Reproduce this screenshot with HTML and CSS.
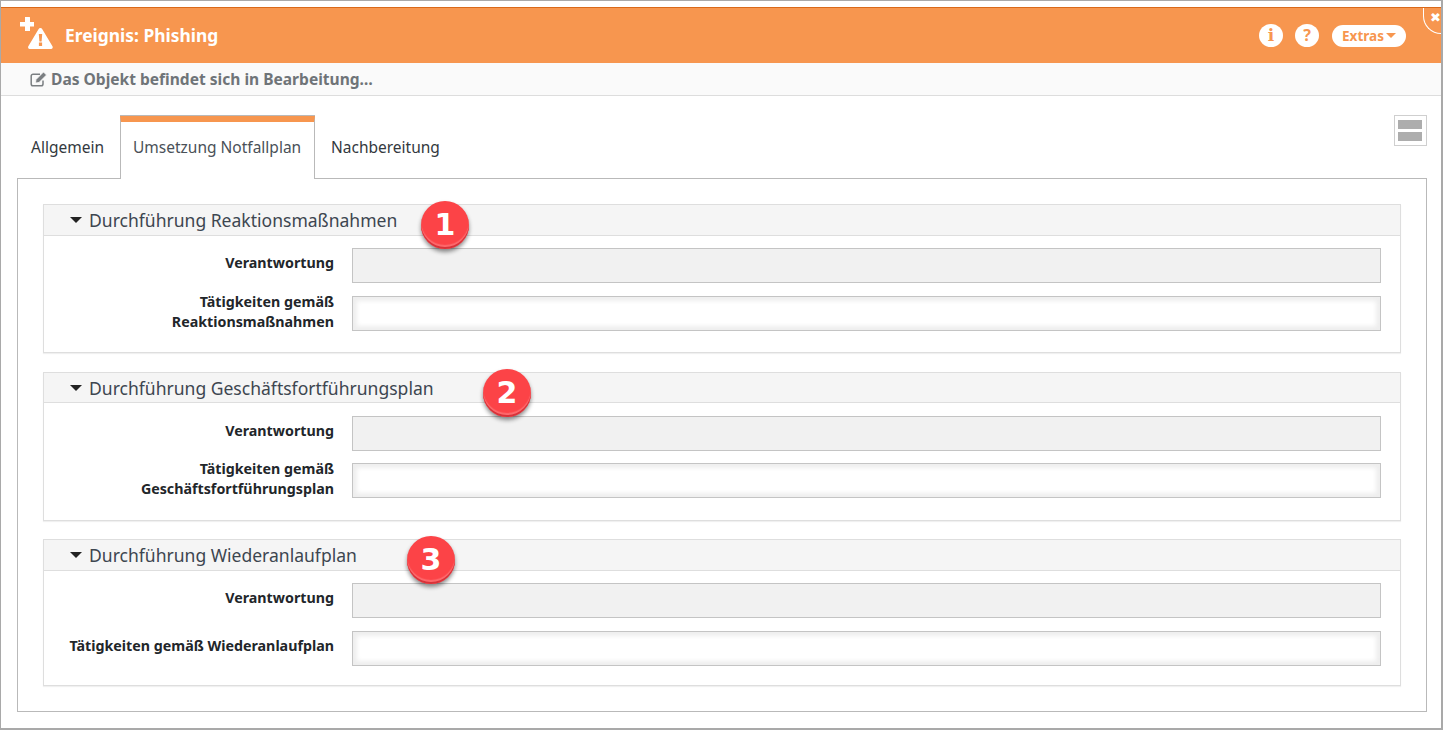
FILE: index.html
```html
<!DOCTYPE html>
<html lang="de">
<head>
<meta charset="utf-8">
<title>Ereignis: Phishing</title>
<link rel="stylesheet" href="styles.css">
</head>
<body>
<div class="window">
  <header class="titlebar">
    <svg class="title-icon" width="36" height="34" viewBox="0 0 36 34">
      <path class="w" d="M6 1h4.500a.5.5 0 0 1 .5.5V6h4v4.500h-4V15H6v-4.500H1V6h5z"/>
      <path class="w" d="M19.500 13.200a2.200 2.200 0 0 1 3.800 0l10.300 17.300a1.800 1.800 0 0 1-1.500 2.500H10.700a1.800 1.800 0 0 1-1.500-2.500z"/>
      <path class="o" d="M19.800 18h3.400l-.6 7.500h-2.200zM19.900 26.500h3.200V30h-3.200z"/>
    </svg>
    <h1 class="title">Ereignis: Phishing</h1>
    <div class="title-actions">
      <span class="round info">i</span>
      <span class="round">?</span>
      <span class="extras">Extras<i class="caret-o"></i></span>
    </div>
    <span class="close">✖</span>
  </header>
  <div class="statusbar">
    <svg class="edit-icon" width="18" height="16" viewBox="0 0 18 16">
      <path class="e1" d="M13 9.500V13a1.800 1.800 0 0 1-1.800 1.800H3A1.800 1.800 0 0 1 1.200 13V5A1.800 1.800 0 0 1 3 3.200h7"/>
      <path class="e2" d="M6 8.500 13.500 1l3 3L9 11.500l-3.500.5z"/>
    </svg>
    <span>Das Objekt befindet sich in Bearbeitung…</span>
  </div>
  <main class="content">
    <nav class="tabs">
      <a class="tab">Allgemein</a>
      <a class="tab active">Umsetzung Notfallplan</a>
      <a class="tab">Nachbereitung</a>
      <span class="layout-toggle"><i></i><i></i></span>
    </nav>
    <div class="panel">
      <section class="group">
        <h2 class="group-head"><i class="caret"></i>Durchführung Reaktionsmaßnahmen</h2>
        <span class="badge b1">1</span>
        <div class="row"><label class="single">Verantwortung</label><div class="field readonly"></div></div>
        <div class="row"><label>Tätigkeiten gemäß<br>Reaktionsmaßnahmen</label><div class="field"></div></div>
      </section>
      <section class="group second">
        <h2 class="group-head"><i class="caret"></i>Durchführung Geschäftsfortführungsplan</h2>
        <span class="badge b2">2</span>
        <div class="row"><label class="single">Verantwortung</label><div class="field readonly"></div></div>
        <div class="row"><label>Tätigkeiten gemäß<br>Geschäftsfortführungsplan</label><div class="field"></div></div>
      </section>
      <section class="group last">
        <h2 class="group-head"><i class="caret"></i>Durchführung Wiederanlaufplan</h2>
        <span class="badge b3">3</span>
        <div class="row"><label class="single">Verantwortung</label><div class="field readonly"></div></div>
        <div class="row"><label class="single">Tätigkeiten gemäß Wiederanlaufplan</label><div class="field"></div></div>
      </section>
    </div>
  </main>
</div>
</body>
</html>
```
FILE: styles.css
```css
* { box-sizing: border-box; }
html, body { margin: 0; padding: 0; background: #fff; overflow: hidden; }
body { font-family: "Noto Sans", "Open Sans", sans-serif; color: #2b2b2b; }
.window {
  position: relative;
  width: 1443px;
  height: 730px;
  border: 1px solid #a9a9a9;
  border-width: 1px 2px 2px 1px;
  padding-top: 6px;
  overflow: hidden;
}
.titlebar {
  position: relative;
  height: 56px;
  background: #f7964f;
  border-top: 1px solid #d9691a;
  display: flex;
  align-items: center;
  padding-left: 64px;
  color: #fff;
}
.title-icon { position: absolute; left: 18px; top: 8px; }
.w { fill: #fff; }
.o { fill: #f7964f; }
.title { margin: 0 0 2px; font-size: 17.400px; font-weight: 700; }
.title-actions { margin-left: auto; margin-right: 35px; display: flex; align-items: center; gap: 12px; }
.round {
  width: 24px; height: 23px; border-radius: 50%; background: #fff; color: #f7964f;
  font: 700 16px/23px "Noto Sans", sans-serif; text-align: center;
}
.round.info { font: 700 17px/23px "DejaVu Serif", serif; }
.extras {
  margin-left: 1px;
  width: 74px; height: 22px; border-radius: 11px; background: #fff; color: #f7964f;
  font-size: 13.500px; font-weight: 700; display: flex; align-items: center; justify-content: center; gap: 2px;
}
.caret-o { width: 0; height: 0; border: 5px solid transparent; border-top: 5px solid #f7964f; border-bottom: 0; }
.close {
  position: absolute; right: 0; top: 0; width: 18px; height: 26px; border-radius: 0 0 0 18px;
  border: 1px solid #fff; border-width: 0 0 1px 1px; color: #fff;
  font: 700 13px/19px "DejaVu Sans", sans-serif; padding-left: 6px; white-space: nowrap;
}
.statusbar {
  height: 33px; background: #fafafa; border-bottom: 1px solid #ddd;
  display: flex; align-items: center; gap: 3px; padding-left: 29px;
  color: #6f7478; font-size: 15.550px; font-weight: 700;
}
.e1 { fill: none; stroke: #7b7f82; stroke-width: 1.500; }
.e2 { fill: #7b7f82; stroke: #fafafa; stroke-width: .8; }
.content { padding: 20px 14px 0 16px; }
.tabs { position: relative; display: flex; height: 62px; padding-left: 1px; }
.tab { height: 63px; padding: 20px 16px 0 13px; font-size: 15.500px; color: #33393e; line-height: 22px; }
.tabs .tab:nth-child(3) { padding-left: 16px; }
.tab.active {
  position: relative; width: 195px; background: #fff; color: #4a5158; padding: 14px 0 0 12px;
  border: 1px solid #b9b9b9; border-bottom: 0; border-top: 6px solid #f7964f;
  box-shadow: 0 -1px 0 #b9b9b9; z-index: 2;
}
.layout-toggle {
  position: absolute; right: 0; top: -1px; width: 33px; height: 31px; border: 1px solid #cfcfcf;
  display: flex; flex-direction: column; justify-content: center; gap: 3px; padding: 0 4px 0 3px;
}
.layout-toggle i { display: block; height: 9px; background: #adadad; }
.panel {
  height: 534px; border: 1px solid #b9b9b9; padding: 25px 25px 0;
}
.group {
  position: relative; height: 149px; border: 1px solid #dedede; margin-bottom: 19px;
  box-shadow: 0 1px 1px #f0f0f0;
}
.group.second { margin-bottom: 18px; }
.group.last { height: 147px; margin: 0; }
.group-head {
  margin: 0 0 12px; height: 31px; background: #f5f5f5; border-bottom: 1px solid #dedede;
  font-size: 17.550px; font-weight: 400; color: #3d4650; line-height: 30px; display: flex; align-items: flex-start; padding-left: 26px;
}
.second .group-head { height: 30px; margin-bottom: 13px; }
.caret { align-self: center; width: 0; height: 0; border: 6px solid transparent; border-top: 6px solid #222; border-bottom: 0; margin-right: 7px; }
.row { display: flex; align-items: flex-start; margin-bottom: 13px; height: 35px; }
.second .row { margin-bottom: 12px; }
.row label {
  width: 290px; text-align: right; font-size: 14.250px; font-weight: 700; color: #22262a; line-height: 20px; margin-top: -4px;
}
.row label.single { margin-top: 5px; }
.field {
  margin-left: 18px; width: 1029px; height: 35px; background: #fff; border: 1px solid #c4c4c4;
  box-shadow: inset 0 0 4px 4px #eee;
}
.field.readonly { background: #f1f1f1; box-shadow: none; }
.badge {
  position: absolute; width: 48px; height: 48px; border-radius: 50%; top: -4px;
  background: #fc4347;
  box-shadow: inset 0 -2px 0 #d8333a, inset 0 -4px 1px #fd6a6d, 0 3px 4px rgba(0,0,0,.45);
  color: #fff; font: 700 30px/48px "DejaVu Sans", sans-serif; text-align: center;
}
.b1 { left: 377px; }
.b2 { left: 439px; }
.b3 { left: 363px; }
```
